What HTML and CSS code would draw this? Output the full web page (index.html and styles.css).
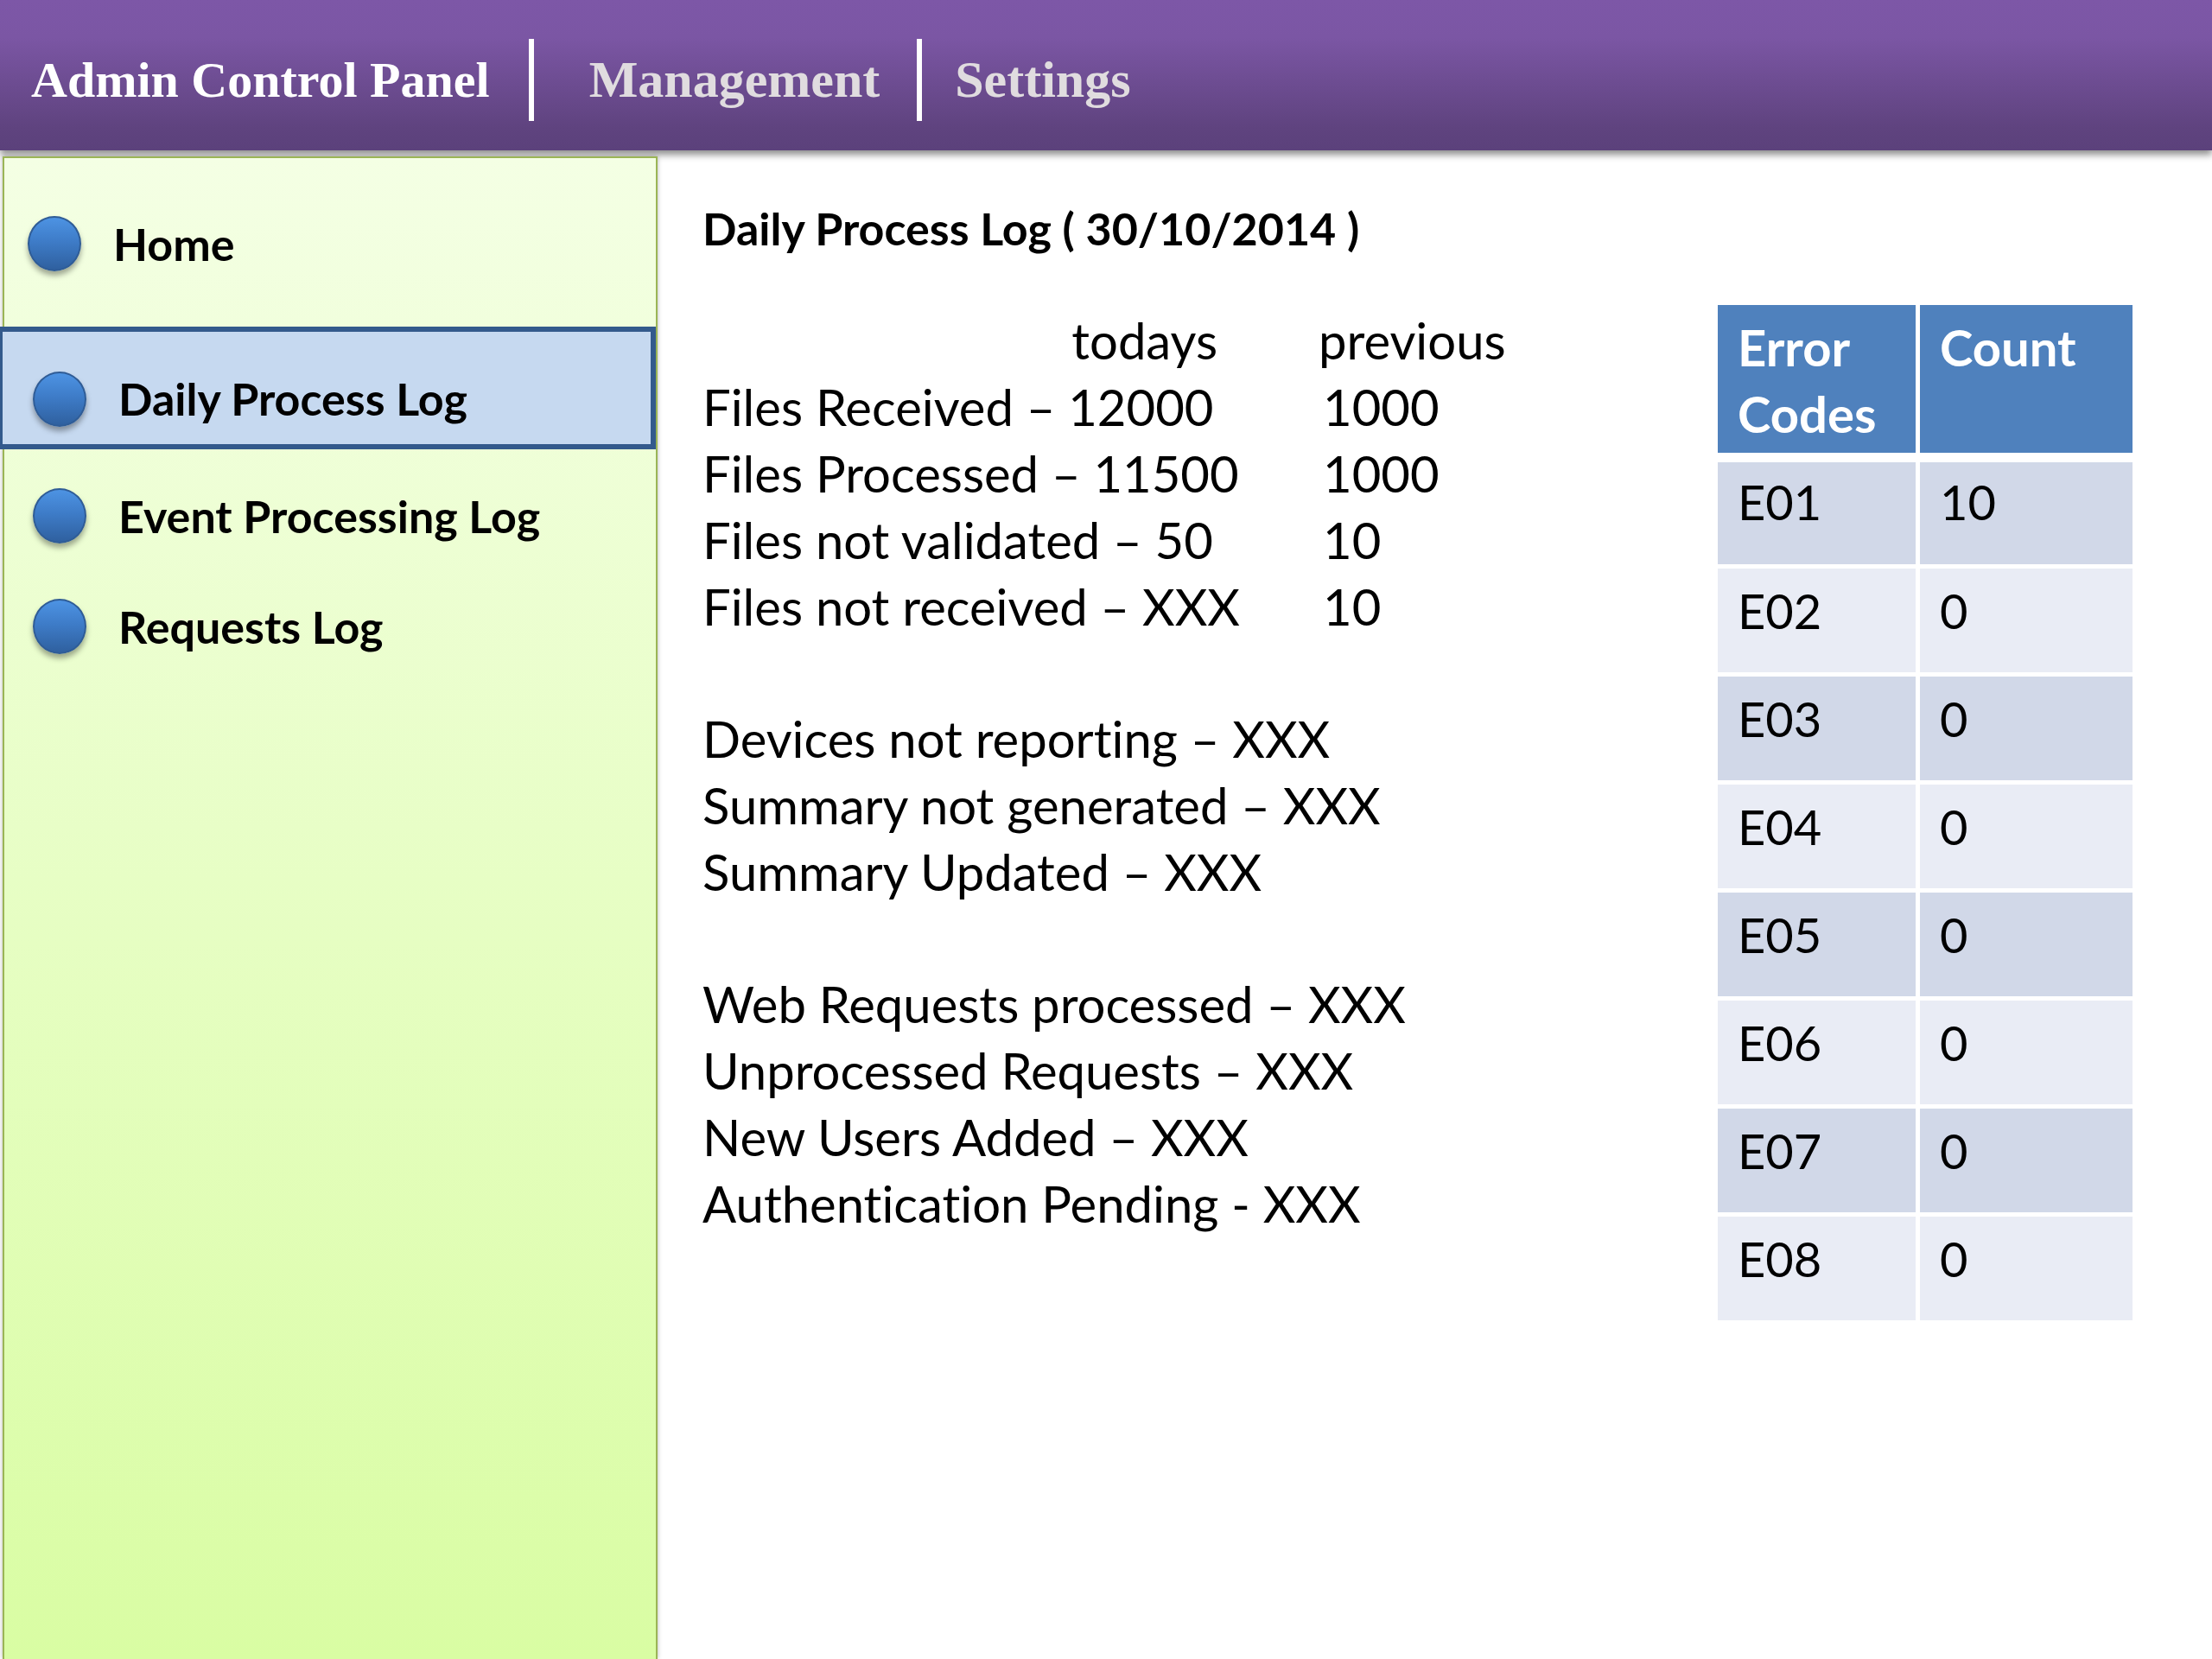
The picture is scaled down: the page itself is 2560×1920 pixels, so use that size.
FILE: index.html
```
<!DOCTYPE html>
<html lang="en">
<head>
    <meta charset="UTF-8">
    <meta name="viewport" content="width=device-width, initial-scale=1.0">
    <title>Admin Control Panel</title>
    <link rel="stylesheet" href="styles.css">
</head>
<body>

    <header class="top-bar">
        <h1 class="brand">Admin Control Panel</h1>
        <nav class="top-nav">
            <a href="#management" class="management">Management</a>
            <a href="#settings">Settings</a>
        </nav>
    </header>

    <div class="page">
        <nav class="sidebar">
            <a href="#home" class="side-link"><span class="bullet"></span>Home</a>
            <div class="logs">
                <a href="#daily" class="side-link active"><span class="bullet"></span>Daily Process Log</a>
                <a href="#events" class="side-link"><span class="bullet"></span>Event Processing Log</a>
                <a href="#requests" class="side-link"><span class="bullet"></span>Requests Log</a>
            </div>
        </nav>

        <main class="content">
            <section class="report">
                <h2>Daily Process Log ( 30/10/2014 )</h2>
                <table class="files">
                    <thead>
                        <tr><th class="todays">todays</th><th>previous</th></tr>
                    </thead>
                    <tbody>
                        <tr><td>Files Received – 12000</td><td>1000</td></tr>
                        <tr><td>Files Processed – 11500</td><td>1000</td></tr>
                        <tr><td>Files not validated – 50</td><td>10</td></tr>
                        <tr><td>Files not received – XXX</td><td>10</td></tr>
                    </tbody>
                </table>
                <ul class="stats">
                    <li>Devices not reporting – XXX</li>
                    <li>Summary not generated – XXX</li>
                    <li>Summary Updated – XXX</li>
                </ul>
                <ul class="stats">
                    <li>Web Requests processed – XXX</li>
                    <li>Unprocessed Requests – XXX</li>
                    <li>New Users Added – XXX</li>
                    <li>Authentication Pending - XXX</li>
                </ul>
            </section>

            <table class="errors">
                <thead>
                    <tr><th class="code">Error Codes</th><th>Count</th></tr>
                </thead>
                <tbody>
                    <tr><td>E01</td><td>10</td></tr>
                    <tr><td>E02</td><td>0</td></tr>
                    <tr><td>E03</td><td>0</td></tr>
                    <tr><td>E04</td><td>0</td></tr>
                    <tr><td>E05</td><td>0</td></tr>
                    <tr><td>E06</td><td>0</td></tr>
                    <tr><td>E07</td><td>0</td></tr>
                    <tr><td>E08</td><td>0</td></tr>
                </tbody>
            </table>
        </main>
    </div>

</body>
</html>
```
FILE: styles.css
```
* {
    box-sizing: border-box;
}

body {
    margin: 0;
    min-height: 100vh;
    display: flex;
    flex-direction: column;
    background: #fff;
    color: #000;
    font-family: Lato, sans-serif;
    font-size: 58px;
    font-variant-ligatures: none;
    line-height: 77px;
}

a {
    color: inherit;
    text-decoration: none;
}

/* Top bar */
.top-bar {
    display: flex;
    align-items: center;
    height: 174px;
    padding: 10px 36px 0;
    background: linear-gradient(#7d57a7, #7b56a4 25%, #5f437f 85%, #5b417b);
    box-shadow: 0 5px 8px rgba(0, 0, 0, 0.45);
    font-family: "Liberation Serif", serif;
    font-size: 60px;
    font-weight: bold;
}

.brand {
    margin: 0;
    padding-right: 45px;
    font-size: 58px;
    color: #fff;
}

.top-nav {
    display: flex;
    color: #e0dcdf;
}

.top-nav a {
    padding: 9px 38px;
    border-left: 6px solid #fff;
}

.top-nav .management {
    padding-left: 64px;
    padding-right: 43px;
}

/* Sidebar */
.page {
    display: flex;
    flex: 1;
    padding-top: 7px;
}

.sidebar {
    flex: 0 0 758px;
    margin-left: 3px;
    padding-top: 35px;
    border: 2px solid #9bb556;
    border-bottom: 0;
    background: linear-gradient(#f4ffe4, #d9fda3);
    box-shadow: 0 0 5px rgba(0, 0, 0, 0.3);
    font-size: 52px;
    font-weight: bold;
}

.side-link {
    display: flex;
    align-items: center;
    gap: 37px;
    height: 128px;
    padding-left: 27px;
}

.logs .side-link {
    padding-left: 33px;
}

.logs .active {
    height: 142px;
    margin: 32px 0 13px -8px;
    padding-top: 25px;
    padding-left: 35px;
    border: 6px solid #335a8c;
    background: #c6d9f0;
}

.bullet {
    width: 62px;
    height: 64px;
    border: 2px solid #2f5c96;
    border-radius: 50%;
    background: linear-gradient(#4d93e3, #3e7cc8 45%, #2f609f);
    box-shadow: 0 5px 6px rgba(0, 0, 0, 0.35);
}

/* Report */
.content {
    display: flex;
    flex: 1;
    justify-content: space-between;
    align-items: flex-start;
    padding: 45px 92px 0 52px;
}

.report h2 {
    margin: 0 0 52px;
    font-size: 52px;
}

.files {
    border-collapse: collapse;
}

.files th,
.files td {
    padding: 0;
    text-align: left;
    font-weight: normal;
}

.files .todays {
    width: 713px;
    padding-right: 117px;
    text-align: right;
}

.files td + td {
    padding-left: 5px;
}

.stats {
    margin: 76px 0 0;
    padding: 0;
    list-style: none;
}

/* Error codes */
.errors {
    width: 480px;
    margin-top: 127px;
    border-spacing: 0;
    table-layout: fixed;
}

.errors th,
.errors td {
    height: 125px;
    padding: 10px 20px 0 23px;
    border-top: 5px solid #fff;
    text-align: left;
    vertical-align: top;
}

.errors th {
    height: 171px;
    border-top: 0;
    background: #4f81bd;
    color: #fff;
}

.errors .code {
    width: 229px;
}

.errors th + th,
.errors td + td {
    border-left: 5px solid #fff;
}

.errors td {
    background: #e9ecf5;
    font-size: 56px;
}

.errors tr:nth-child(odd) td {
    background: #d1d8e8;
}

.errors tr:first-child td {
    height: 129px;
    padding-top: 7px;
    border-top-width: 11px;
}
```
